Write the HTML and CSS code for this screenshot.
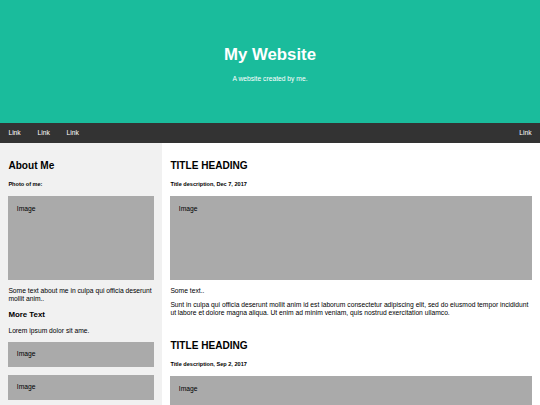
FILE: index.html
```
<!DOCTYPE html>
<html>
<head>
<meta charset="utf-8">
<title>My Website</title>
<link rel="stylesheet" href="styles.css">
</head>
<body>
<div class="header">
  <h1>My Website</h1>
  <p>A website created by me.</p>
</div>
<div class="navbar">
  <a href="#">Link</a>
  <a href="#">Link</a>
  <a href="#">Link</a>
  <a href="#" class="right">Link</a>
</div>
<div class="row">
  <div class="side">
    <h2>About Me</h2>
    <h5>Photo of me:</h5>
    <div class="fakeimg tall">Image</div>
    <p>Some text about me in culpa qui officia deserunt mollit anim..</p>
    <h3>More Text</h3>
    <p>Lorem ipsum dolor sit ame.</p>
    <div class="fakeimg short">Image</div><br>
    <div class="fakeimg short">Image</div><br>
    <div class="fakeimg short">Image</div>
  </div>
  <div class="main">
    <h2>TITLE HEADING</h2>
    <h5>Title description, Dec 7, 2017</h5>
    <div class="fakeimg tall">Image</div>
    <p>Some text..</p>
    <p>Sunt in culpa qui officia deserunt mollit anim id est laborum consectetur adipiscing elit, sed do eiusmod tempor incididunt ut labore et dolore magna aliqua. Ut enim ad minim veniam, quis nostrud exercitation ullamco.</p>
    <br>
    <h2>TITLE HEADING</h2>
    <h5>Title description, Sep 2, 2017</h5>
    <div class="fakeimg tall">Image</div>
    <p>Some text..</p>
  </div>
</div>
</body>
</html>
```

FILE: styles.css
```
* { box-sizing: border-box; }
body {
  margin: 0;
  font-family: "Liberation Sans", Arial, Helvetica, sans-serif;
  font-size: 6.72px;
  line-height: 1.15;
  color: #000;
}
p { margin: 6.72px 0; }
h2 { font-size: 10.08px; margin: 8.37px 0; }
h3 { font-size: 7.86px; margin: 7.86px 0; }
h5 { font-size: 5.58px; margin: 9.35px 0; }
.header {
  padding: 33.6px;
  text-align: center;
  background: #1abc9c;
  color: #fff;
}
.header h1 { font-size: 16.8px; margin: 11.26px 0; }
.navbar {
  display: flex;
  background-color: #333;
}
.navbar a {
  display: block;
  color: #fff;
  text-align: center;
  padding: 5.88px 8.4px;
  text-decoration: none;
}
.navbar a.right { margin-left: auto; }
.row { display: flex; }
.side {
  flex: 30%;
  background-color: #f1f1f1;
  padding: 8.4px;
}
.main {
  flex: 70%;
  background-color: #fff;
  padding: 8.4px;
}
.fakeimg {
  background-color: #aaa;
  width: 100%;
  padding: 8.4px;
}
.tall { height: 84px; }
.short { height: 25.2px; }
```
